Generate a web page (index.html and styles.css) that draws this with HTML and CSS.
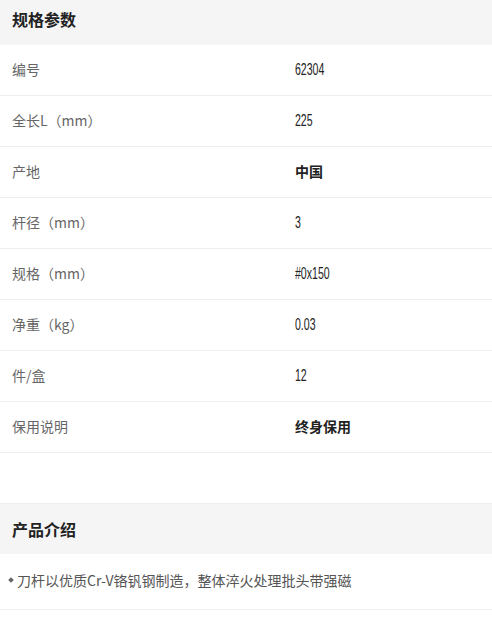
FILE: index.html
```html
<!DOCTYPE html>
<html lang="zh-CN">
<head>
  <meta charset="UTF-8">
  <meta name="viewport" content="width=device-width, initial-scale=1.0">
  <title>规格参数</title>
  <link rel="stylesheet" href="styles.css">
</head>
<body>
  <!-- Spec section -->
  <section class="spec">
    <h2 class="section-title spec-title">规格参数</h2>
    <ul class="spec-list">
      <li class="spec-row"><span class="spec-label">编号</span><span><span class="spec-value">62304</span></span></li>
      <li class="spec-row"><span class="spec-label">全长L（mm）</span><span><span class="spec-value">225</span></span></li>
      <li class="spec-row"><span class="spec-label">产地</span><span class="spec-strong">中国</span></li>
      <li class="spec-row"><span class="spec-label">杆径（mm）</span><span><span class="spec-value">3</span></span></li>
      <li class="spec-row"><span class="spec-label">规格（mm）</span><span><span class="spec-value">#0x150</span></span></li>
      <li class="spec-row"><span class="spec-label">净重（kg）</span><span><span class="spec-value">0.03</span></span></li>
      <li class="spec-row"><span class="spec-label">件/盒</span><span><span class="spec-value">12</span></span></li>
      <li class="spec-row"><span class="spec-label">保用说明</span><span class="spec-strong">终身保用</span></li>
    </ul>
  </section>

  <!-- Intro section -->
  <section class="intro">
    <h2 class="section-title">产品介绍</h2>
    <p class="intro-item">刀杆以优质Cr-V铬钒钢制造，整体淬火处理批头带强磁</p>
  </section>
</body>
</html>
```

FILE: styles.css
```css
body {
  margin: 0;
  padding: 0;
  background-color: #fff;
  font-family: "Noto Sans CJK SC", "Liberation Sans", sans-serif;
  color: #333;
}
.section-title {
  margin: 0;
  height: 50px;
  display: flex;
  align-items: center;
  padding: 0 12px;
  background-color: #f5f5f5;
  font-size: 16px;
  font-weight: bold;
  color: #222;
}
.spec-title {
  height: 45px;
  box-sizing: border-box;
  padding-bottom: 8px;
}
.spec-list {
  list-style-type: none;
  margin: 0;
  padding: 0;
}
.spec-row {
  display: grid;
  grid-template-columns: 283px 1fr;
  align-items: center;
  height: 50px;
  padding: 0 12px 2px;
  box-sizing: border-box;
  height: 51px;
  border-bottom: 1px solid #eee;
  font-size: 14px;
}
.spec-label {
  color: #666;
}
.spec-value {
  display: inline-block;
  color: #222;
  font-family: "Liberation Sans", sans-serif;
  font-size: 16px;
  transform: scaleX(0.66);
  transform-origin: left center;
}
.spec-strong {
  font-size: 14px;
  font-weight: bold;
  color: #222;
}

/* Intro styles */
.intro {
  margin-top: 50px;
  border-top: 1px solid #eee;
}
.intro-item {
  margin: 0;
  padding: 15px 8px 18px;
  border-bottom: 1px solid #eee;
  font-size: 14px;
  line-height: 22px;
  color: #555;
  display: flex;
  align-items: center;
}
.intro-item::before {
  content: "";
  width: 4px;
  height: 4px;
  margin: 0 4px 0 1px;
  background-color: #666;
  transform: rotate(45deg);
}
```
